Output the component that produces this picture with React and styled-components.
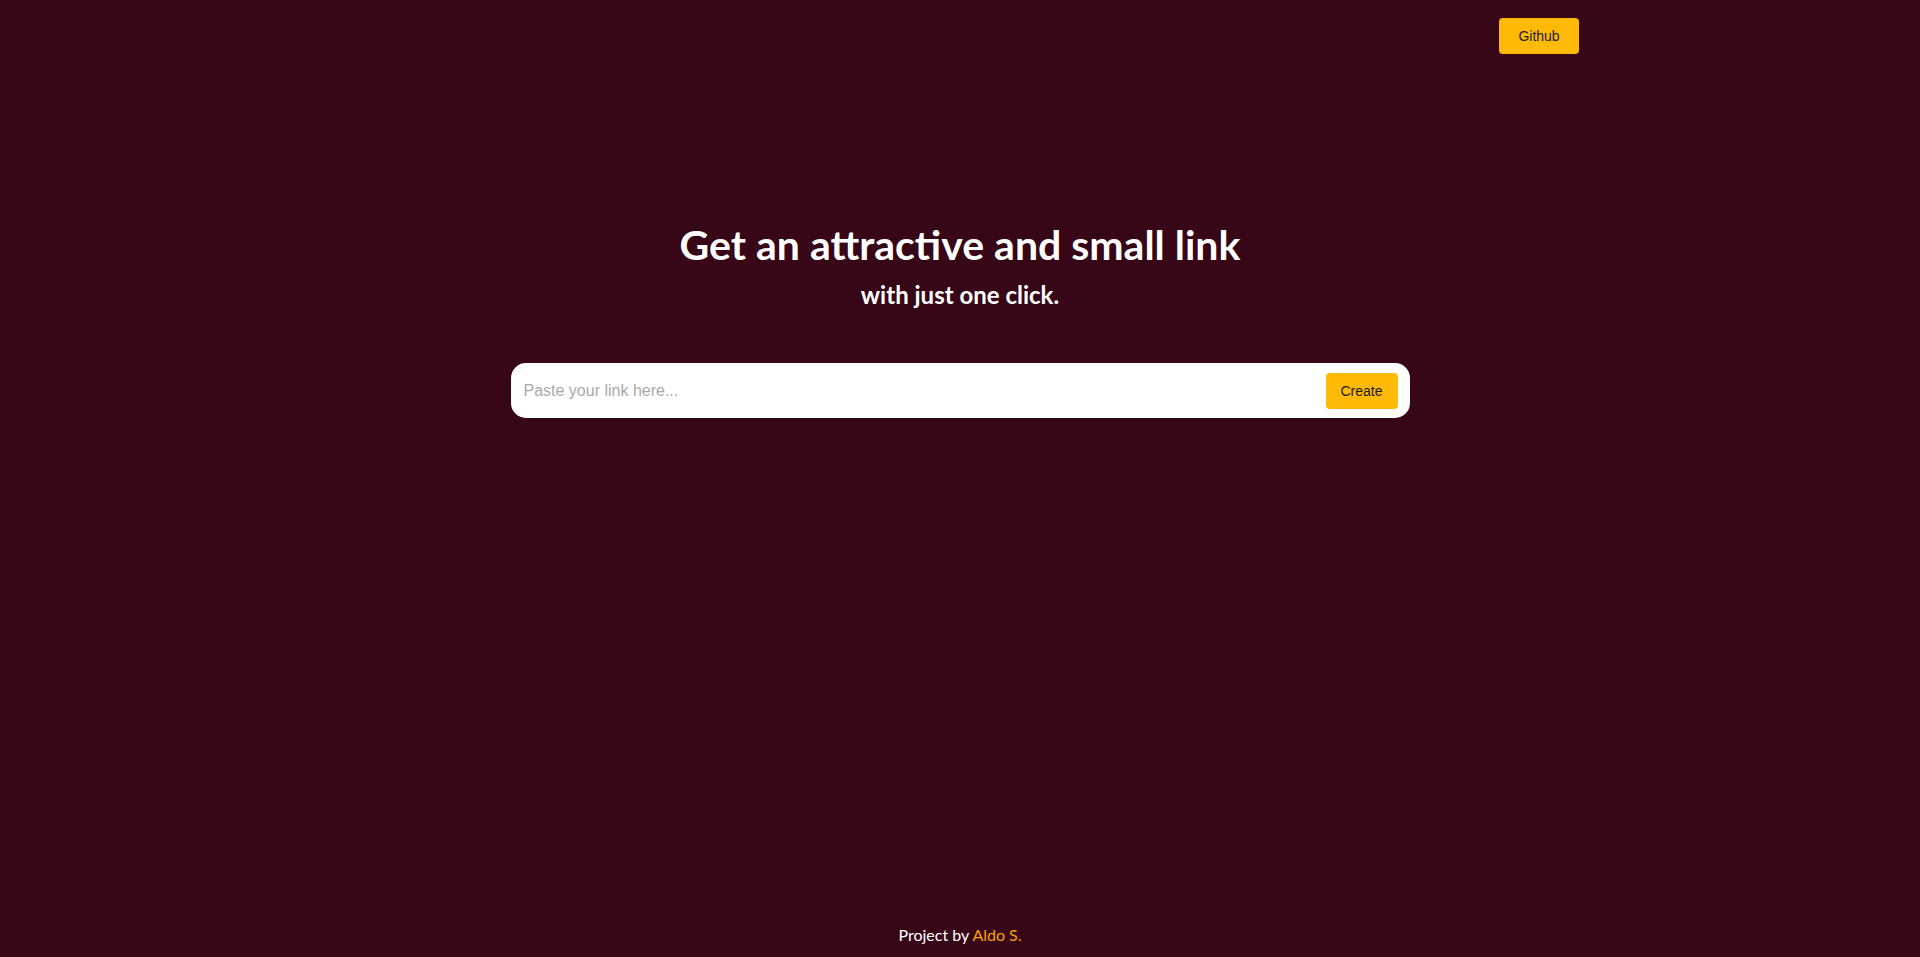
import React from "react";
import styled, { createGlobalStyle } from "styled-components";

const GlobalStyle = createGlobalStyle`
    html, body {
        margin: 0;
        padding: 0;
        background: #370617;
    }
    * { box-sizing: border-box; }`;

const Page = styled.div`
        min-height: 100vh;
        display: flex;
        flex-direction: column;
        background: #370617;
        font-family: Lato, "Open Sans", sans-serif;`,
    Header = styled.header`
        width: 100%;
        max-width: 1238px;
        margin: 0 auto;
        padding-top: 18px;
        display: flex;
        justify-content: flex-end;`,
    YellowButton = styled.button`
        background: #ffba08;
        border: none;
        border-radius: 4px;
        color: #1a1a1a;
        font-family: "Liberation Sans", Arial, sans-serif;
        font-size: 14px;
        height: 36px;
        width: ${props => props.$width}px;
        padding: 0;
        cursor: pointer;`,
    Main = styled.main`
        flex: 1;
        display: flex;
        flex-direction: column;
        align-items: center;
        padding-top: 166px;`,
    Title = styled.h1`
        margin: 0;
        color: #fff;
        font-size: 41px;
        font-weight: 700;
        line-height: 50px;`,
    Subtitle = styled.h2`
        margin: 10px 0 0;
        color: #fff;
        font-size: 24px;
        font-weight: 700;
        line-height: 30px;`,
    LinkForm = styled.form`
        margin-top: 53px;
        width: 899px;
        height: 55px;
        background: #fff;
        border-radius: 15px;
        display: flex;
        align-items: center;
        padding: 0 12px 0 13px;
        gap: 12px;`,
    LinkInput = styled.input`
        flex: 1;
        border: none;
        outline: none;
        background: transparent;
        font-family: "Liberation Sans", Arial, sans-serif;
        font-size: 16px;
        color: #333;
        padding: 0;
        &::placeholder { color: #a9a9a9; }`,
    Footer = styled.footer`
        text-align: center;
        color: #fff;
        font-size: 16px;
        padding-bottom: 13px;`,
    Author = styled.a`
        color: #faa307;
        text-decoration: none;`;

export default function App() {
    return <Page>
        <GlobalStyle/>
        <Header>
            <YellowButton $width={80}>Github</YellowButton>
        </Header>
        <Main>
            <Title>Get an attractive and small link</Title>
            <Subtitle>with just one click.</Subtitle>
            <LinkForm onSubmit={e => e.preventDefault()}>
                <LinkInput placeholder="Paste your link here..."/>
                <YellowButton $width={72} type="submit">Create</YellowButton>
            </LinkForm>
        </Main>
        <Footer>
            Project by <Author href="#">Aldo S.</Author>
        </Footer>
    </Page>;
}
